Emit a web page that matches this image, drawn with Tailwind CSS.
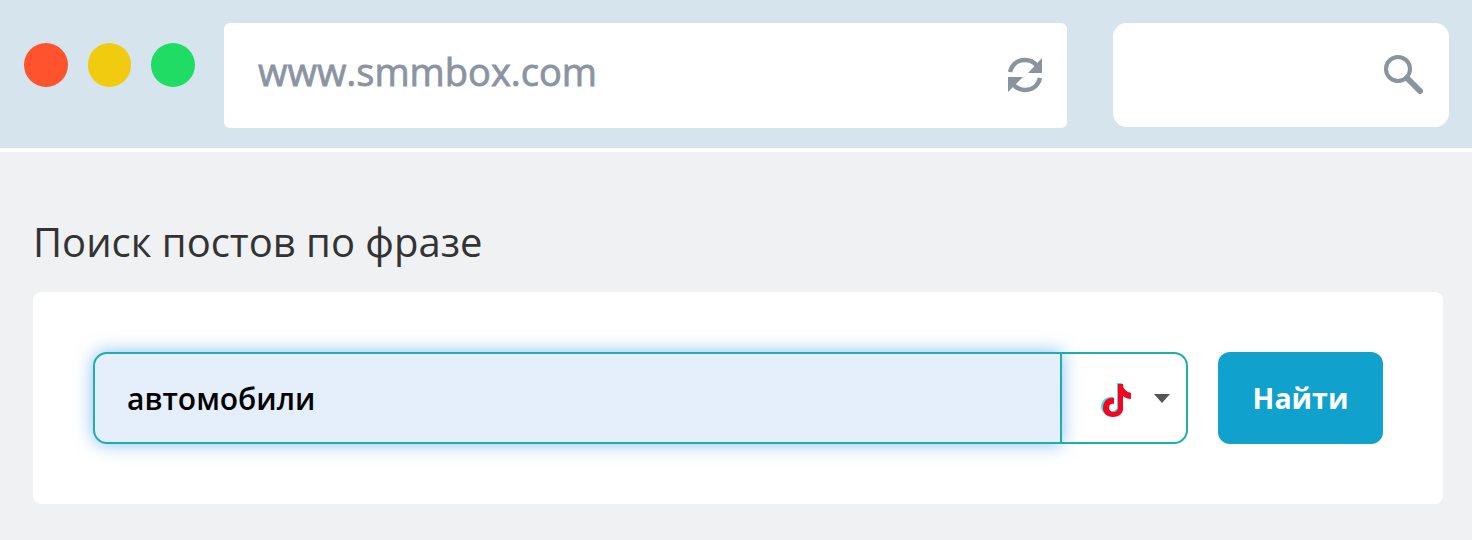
<!DOCTYPE html>
<html lang="ru">
  <head>
    <meta charset="UTF-8" />
    <meta name="viewport" content="width=device-width, initial-scale=1.0" />
    <title>Поиск постов по фразе</title>
    <script src="https://cdn.jsdelivr.net/npm/@tailwindcss/browser@4"></script>
  </head>
  <body class="bg-[#eff1f3] font-['Open_Sans',sans-serif] h-[540px] overflow-hidden">
    <header class="h-[148px] bg-[#d6e4ed] flex items-start pt-[23px] pl-[24px]">
      <div class="flex gap-[20px] mt-[20px]">
        <span class="w-[43.5px] h-[43.5px] rounded-full bg-[#ff532e]"></span>
        <span class="w-[43.5px] h-[43.5px] rounded-full bg-[#f1cb10]"></span>
        <span class="w-[43.5px] h-[43.5px] rounded-full bg-[#20dc64]"></span>
      </div>
      <div class="ml-[29.5px] w-[843px] h-[105px] bg-white rounded-[6px] flex items-center justify-between pl-[34px] pr-[23px]">
        <span class="text-[38px] text-[#8a94a3] [-webkit-text-stroke:0.8px_#8a94a3] leading-none -mt-[10px]">www.smmbox.com</span>
        <svg class="w-[38px] h-[38px] text-[#8a949e] -mt-[2px]" viewBox="0 0 38 38" fill="none" stroke="currentColor" stroke-width="4.5">
          <path d="M4 16C6 8 12 4 19 4c5 0 9 2 12 6" />
          <path d="M34 22c-2 8-8 12-15 12-5 0-9-2-12-6" />
          <path d="M36 2v15H22z" fill="currentColor" stroke="none" />
          <path d="M2 36V21h15z" fill="currentColor" stroke="none" />
        </svg>
      </div>
      <div class="ml-[46px] w-[336px] h-[104px] bg-white rounded-[14px] flex items-center justify-end pr-[26px]">
        <svg class="w-[40px] h-[40px] text-[#8a949e] -mt-[2px]" viewBox="0 0 40 40" fill="none" stroke="currentColor">
          <circle cx="15" cy="15" r="12" stroke-width="4" />
          <path d="M24 24l13 13" stroke-width="6" stroke-linecap="round" />
        </svg>
      </div>
    </header>
    <div class="h-[4px] bg-white"></div>
    <main class="px-[33px] pt-[65px]">
      <h1 class="text-[40px] leading-[50px] text-[#333]">Поиск постов по фразе</h1>
      <section class="mt-[25px] w-[1410px] h-[212px] bg-white rounded-[8px] pt-[60px] pl-[60px] flex items-start">
        <div class="flex w-[1095px] h-[92px]">
          <div class="w-[969px] bg-[#e5eefb] border-2 border-[#1eaeb0] rounded-l-[14px] shadow-[0_0_18px_rgba(20,130,220,0.5)] flex items-center pl-[32px] relative z-10">
            <span class="text-[30px] font-semibold text-black">автомобили</span>
          </div>
          <div class="flex-1 border-2 border-l-0 border-[#1eaeb0] rounded-r-[14px] flex items-center pl-[37px]">
            <svg class="w-[34px] h-[36px] mt-[2px]" viewBox="0 0 34 36">
              <path d="M18 2h5c0 5 3 8 8 9v5c-3 0-6-1-8-3v14c0 6-5 8-10 8-6 0-11-4-11-9 0-7 6-11 12-10v5c-3-1-6 1-6 5 0 2 2 4 5 4s5-2 5-4z" fill="#45e0e6" />
              <path d="M19 3h5c0 5 3 8 8 9v6c-3 0-6-1-8-3v13c0 5-5 8-10 8-6 0-10-4-10-9 0-7 5-11 11-10v6c-3-1-5 1-5 4 0 2 2 4 4 4 3 0 5-2 5-4z" fill="#f5041f" />
            </svg>
            <span class="ml-[21px] w-0 h-0 border-x-[8px] border-x-transparent border-t-[9px] border-t-[#555]"></span>
          </div>
        </div>
        <button class="ml-[30px] w-[165px] h-[92px] rounded-[12px] bg-[#10a2cc] text-white text-[28.5px] font-bold">Найти</button>
      </section>
    </main>
  </body>
</html>
